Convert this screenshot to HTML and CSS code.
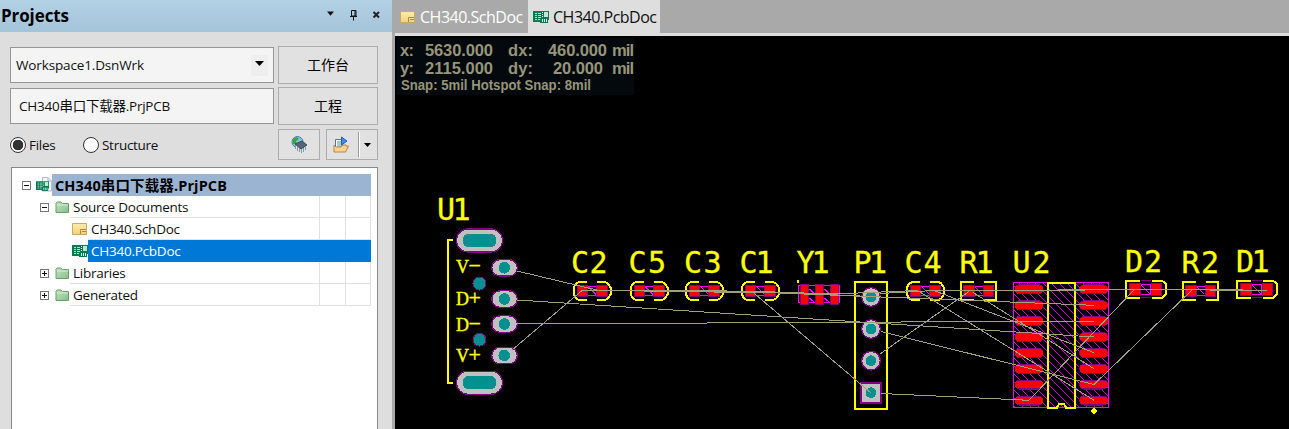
FILE: index.html
```
<!DOCTYPE html>
<html lang="zh-CN">
<head>
<meta charset="utf-8">
<title>CH340.PcbDoc</title>
<link rel="stylesheet" href="styles.css">
</head>
<body>
<svg class="defs" width="0" height="0">
  <defs>
    <linearGradient id="folderFill" x1="0" y1="0" x2="1" y2="1"><stop offset="0" stop-color="#c2e0bd"/><stop offset="1" stop-color="#86c08d"/></linearGradient>
    <linearGradient id="schFill" x1="0" y1="0" x2="0" y2="1"><stop offset="0" stop-color="#fdebae"/><stop offset="1" stop-color="#f0d27c"/></linearGradient>
    <symbol id="folder" viewBox="0 0 15 13"><path d="M1 11.5V2.500L2 1H6L7.500 2.500H13.500V11.500Z" fill="url(#folderFill)" stroke="#6a9f72"/><path d="M2 4H13" stroke="#d7edd4"/></symbol>
    <symbol id="sch" viewBox="0 0 15 12"><path d="M.5.500H14.500V11.500H.5Z" fill="url(#schFill)" stroke="#cbaa5c"/><path d="M8.500 11V6.500H14M10 8.500H14" fill="none" stroke="#a98a48"/></symbol>
    <symbol id="pcb" viewBox="0 0 16 12"><path d="M0 0H16V9H15V12H7V11H0Z" fill="#087a54"/><path d="M2 2.500H4M5 2.500H8M2 4.500H4M5 4.500H8M2 6.500H4M5 6.500H8M2 8.500H4M5 8.500H7" stroke="#a8e0c4"/><path d="M9.500 1V7" stroke="#fff" stroke-dasharray="1 1"/><path d="M11 1H15V6H11Z" fill="#b9ead4"/><path d="M9.500 8V11M11.500 8V11M13.500 8V11" stroke="#d6f2e4"/></symbol>
  </defs>
</svg>
<div class="app">
  <aside class="panel">
    <header class="panel-head">
      <h1>Projects</h1>
      <svg class="head-icons" viewBox="0 0 54 12"><path d="M0 2.500H7L3.500 6.800Z" fill="#111"/><path d="M24.500 1.500H29V7H24.500ZM28 1V7M23 7.500H30M26.500 7.500V11.500" fill="none" stroke="#111"/><path d="M46.500 3L52 8.500M52 3L46.500 8.500" stroke="#222" stroke-width="2"/></svg>
    </header>
    <div class="controls">
      <div class="field combo"><span class="ws">Workspace1.DsnWrk</span><span class="drop"><svg viewBox="0 0 9 5"><path d="M0 0H9L4.500 5Z"/></svg></span></div>
      <button class="btn">工作台</button>
      <div class="field project"><span class="prj">CH340串口下载器.PrjPCB</span></div>
      <button class="btn">工程</button>
    </div>
    <div class="modes">
      <span class="radio on"></span><label class="files">Files</label>
      <span class="radio"></span><label class="structure">Structure</label>
      <button class="tool chip"><svg viewBox="0 0 17 17"><circle cx="6.500" cy="6" r="5.500" fill="#7fc6e6" stroke="#43819c"/><path d="M2 3L6 1L8 3L5 5L6 8L2 8Z" fill="#39a637"/><path d="M5 12L11 16L16 13V9L5 8Z" fill="#dbe6e8"/><path d="M4 8L11 5L16 9L10 13Z" fill="#566575" stroke="#3d4a57"/><path d="M4.500 9V13M6.500 11V15M8.500 12V16M10.500 13V17M12.500 12V16M14.500 11V14" stroke="#7f9ba5" stroke-width="1"/></svg></button>
      <button class="tool split"><svg class="open" viewBox="0 0 16 17"><path d="M2.500 3.500H9V14H2.500Z" fill="#fff" stroke="#53789c"/><path d="M4 6H8M4 8H8M4 10H8" stroke="#5689b8"/><path d="M8.500 1L14 5L8.500 9Z" fill="#4389ed" stroke="#235fca"/><path d="M1 9V16H12.500L15.500 10H13V9H10L8 11H3Z" fill="#f7d291" stroke="#b78541"/></svg><i></i><svg class="caret" viewBox="0 0 7 4"><path d="M0 0H7L3.500 4Z"/></svg></button>
    </div>
    <div class="tree">
      <div class="row root"><span class="toggle"></span><svg class="ic-root" viewBox="0 0 16 16"><path d="M6.500.5H12L15.500 4V14H6.500Z" fill="#f4f6fb" stroke="#b0b9ce"/><path d="M12 .5V4H15.500" fill="none" stroke="#b0b9ce"/><use href="#pcb" y="4" width="13" height="10"/></svg><span class="name">CH340串口下载器.PrjPCB</span></div>
      <div class="row l1"><span class="toggle"></span><svg class="ic-folder"><use href="#folder"/></svg><span class="name">Source Documents</span></div>
      <div class="row l2"><svg class="ic-doc"><use href="#sch" width="15" height="12"/></svg><span class="name">CH340.SchDoc</span></div>
      <div class="row l2 selected"><svg class="ic-doc"><use href="#pcb" width="16" height="12"/></svg><span class="name">CH340.PcbDoc</span></div>
      <div class="row l1"><span class="toggle plus"></span><svg class="ic-folder"><use href="#folder"/></svg><span class="name">Libraries</span></div>
      <div class="row l1"><span class="toggle plus"></span><svg class="ic-folder"><use href="#folder"/></svg><span class="name">Generated</span></div>
    </div>
  </aside>
  <main class="editor">
    <nav class="tabs">
      <div class="tab"><svg><use href="#sch" width="15" height="12"/></svg><span>CH340.SchDoc</span></div>
      <div class="tab active"><svg><use href="#pcb" width="16" height="12"/></svg><span>CH340.PcbDoc</span></div>
    </nav>
    <svg class="board" viewBox="395 36 894 393">
      <defs>
        <pattern id="hatch" width="8" height="8" patternUnits="userSpaceOnUse"><path d="M-1 -1L9 9" stroke="#c800c8" stroke-width="1"/></pattern>
        <g id="chip"><path class="mag" d="M-5-4.500H5M-5 4.500H5M-4-4L4 4"/><path class="pad" d="M-15-5H-4.500V6H-15ZM4.500-5H15V6H4.500Z"/></g>
        <g id="cap"><use href="#chip"/><path class="silk" d="M-5-8.500H-13L-16-7L-18.500-3V4L-16 8L-13 9.500H-5M5-8.500H13L16-7L18.500-3V4L16 8L13 9.500H5"/></g>
        <g id="res"><use href="#chip"/><path class="silk" d="M-5-8.500H-17.500V9.500H-5M5-8.500H17.500V9.500H5"/></g>
        <g id="led"><path class="mag" d="M-5-5H5V5H-5ZM-5-5L5 5"/><path class="rim" d="M-5-9H5M-5 8H5"/><path class="pad" d="M-16-6H-5.500V6H-16ZM5.500-6H16V6H5.500Z"/><path class="silk" d="M-6-8.500H-19.500V8.500H-6M6-8.500H17L20-6V5L17 8.500H6"/></g>
        <g id="slot"><rect class="ring" x="-23" y="-11.500" width="46" height="23" rx="11.500"/><rect class="hole" x="-16.500" y="-6.500" width="33" height="13" rx="5"/></g>
        <g id="oval"><rect class="ring" x="-12.500" y="-8.200" width="25.500" height="16.500" rx="8.200"/><circle class="hole" r="5.800"/></g>
        <g id="round"><circle class="ring" r="9.300"/><circle class="hole" r="5.400"/></g>
        <g id="pin"><rect x="-14.500" y="-5" width="29" height="10" rx="5" fill="#800080"/><rect x="-14" y="-3.800" width="28" height="7.700" rx="3.800" fill="#f00"/></g>
        <g id="pins"><use href="#pin" y="289.300"/><use href="#pin" y="305.300"/><use href="#pin" y="321"/><use href="#pin" y="337"/><use href="#pin" y="353"/><use href="#pin" y="368.800"/><use href="#pin" y="384.500"/><use href="#pin" y="400.500"/></g>
      </defs>
      <rect class="hud-bg" x="397" y="38" width="237" height="57"/>
      <g class="hud">
        <text x="400" y="56" textLength="14">x:</text><text x="425" y="56" textLength="68">5630.000</text><text x="508" y="56" textLength="25">dx:</text><text x="548" y="56" textLength="59">460.000</text><text x="612" y="56" textLength="22">mil</text>
        <text x="400" y="74" textLength="14">y:</text><text x="425" y="74" textLength="68">2115.000</text><text x="508" y="74" textLength="25">dy:</text><text x="553" y="74" textLength="50">20.000</text><text x="612" y="74" textLength="22">mil</text>
        <text class="snap" x="401" y="90" textLength="190" lengthAdjust="spacingAndGlyphs">Snap: 5mil Hotspot Snap: 8mil</text>
      </g>
      <g class="crisp">
        <path class="silk" d="M453 240H448V383H453"/>
        <use href="#slot" x="479.500" y="240.500"/><use href="#slot" x="479.500" y="382.700"/>
        <use href="#oval" x="504.300" y="267.800"/><use href="#oval" x="504.300" y="299"/><use href="#oval" x="504.300" y="324"/><use href="#oval" x="504.300" y="355.500"/>
        <circle class="mount" cx="479.500" cy="283.500" r="6.500"/><circle class="mount" cx="479.500" cy="339.700" r="6.500"/>
        <use href="#cap" x="592" y="290.500"/><use href="#cap" x="649" y="290.500"/><use href="#cap" x="704.200" y="290.500"/><use href="#cap" x="760.200" y="290.500"/><use href="#cap" x="925.300" y="290.500"/>
        <use href="#res" x="978.500" y="290.500"/><use href="#res" x="1200.500" y="290.500"/>
        <use href="#led" x="1145.500" y="289.500"/><use href="#led" x="1256.500" y="289.500"/>
        <path class="mag" d="M798.500 285.500H839V302H798.500ZM808 288L815 294M823 288L830 294M808 297L814 302M823 297L829 302"/>
        <path class="pad" d="M800.500 284H808V304H800.500ZM815.500 284H823V304H815.500ZM830.500 284H838V304H830.500Z"/>
        <path d="M797 280H799V283H797Z" fill="#ff0"/>
        <rect class="silk" x="855" y="282" width="32" height="127"/>
        <use href="#round" x="871" y="297"/><use href="#round" x="871" y="329"/><use href="#round" x="871" y="360.700"/>
        <rect class="ring" x="861" y="383" width="20" height="20"/><circle class="hole" cx="871" cy="392.700" r="5.400"/>
        <rect x="1013.500" y="282.500" width="95" height="125" fill="url(#hatch)" stroke="#f0f"/>
        <use href="#pins" x="1029"/><use href="#pins" x="1093.700"/>
        <path class="silk" d="M1048 282.500H1075V407.500H1066L1064 404H1059L1057 407.500H1048Z"/>
        <circle cx="1094" cy="411" r="2.700" fill="#ff0"/>
        <path class="net" d="M517 271L601 291M517 300L1094 337M517 324L1094 321M512 350L582 290.500H714L1094 305.300M644 291H716L772 292L871 296.500M752 291.500L871 393M695 291.500H760L834 294L917 290.500M880 293.500L934 290.500M881 393.500L1029 400.300M881 331.500L1094 384.500M880 354L969 291.500M917.500 290.500L1094 400.300M934 290.500L1094 352.700M973 292.500L1094 368.700M934 290.500L1085 290M1058 289.500H1192M1134 290L1029 400.300M1192 290L1094 384.500M1192 289.500L1210 290H1267M1210 290.500H1243"/>
        <path class="net wide" d="M658 291H695M714 292H768M1210 290H1243"/>
      </g>
      <g class="ref">
        <text x="437 452.500" y="220">U1</text><text x="571 589.500" y="273">C2</text><text x="628.500 648" y="273">C5</text><text x="684 703.500" y="273">C3</text><text x="739.500 755.500" y="273">C1</text><text x="796.500 811.500" y="272.500">Y1</text><text x="853.500 869" y="272.500">P1</text><text x="904.500 923.500" y="272.500">C4</text><text x="959.500 975.500" y="272.500">R1</text><text x="1012.500 1032.500" y="273">U2</text><text x="1125 1144" y="272">D2</text><text x="1181.500 1201" y="273">R2</text><text x="1236 1251.500" y="272">D1</text>
      </g>
      <g class="pinname">
        <text x="456" y="272.700">V<tspan class="sign" x="468.500">−</tspan></text><text x="456" y="305.300">D<tspan class="sign" x="468.500">+</tspan></text><text x="456" y="330.700">D<tspan class="sign" x="468.500">−</tspan></text><text x="456" y="361.700">V<tspan class="sign" x="468.500">+</tspan></text>
      </g>
    </svg>
  </main>
</div>
</body>
</html>
```
FILE: styles.css
```
* { box-sizing: border-box; }
body { margin: 0; font: 13.500px/22px "Open Sans", "Noto Sans CJK SC", sans-serif; color: #111; }
.defs { display: block; height: 0; }
.app { display: flex; width: 1289px; height: 429px; overflow: hidden; background: #dedede; }
.panel { width: 392px; flex: none; display: flex; flex-direction: column; }
.panel-head { height: 32px; flex: none; display: flex; align-items: center; justify-content: space-between; padding: 0 11px 0 1px; background: linear-gradient(#b3d1e5, #a4c4da); }
.panel-head h1 { margin: 0; font-size: 17px; font-weight: 700; letter-spacing: -.1px; color: #000; }
.head-icons { width: 54px; height: 12px; margin-top: -3px; }
.controls { display: grid; grid-template-columns: 264px 100px; grid-template-rows: 38px 38px; column-gap: 4px; row-gap: 3px; padding: 14px 0 0 10px; align-items: center; }
.field { height: 36px; border: 1px solid #969696; background: #f4f4f4; display: flex; align-items: center; justify-content: space-between; padding: 0 5px; white-space: nowrap; }
.project { padding-left: 8px; }
.ws { letter-spacing: -.14px; }
.prj { letter-spacing: -.24px; }
.drop { width: 17px; height: 21px; background: #eee; display: flex; align-items: center; justify-content: center; }
.drop svg { width: 9px; height: 5px; margin-top: -3px; }
.btn, .tool { border: 1px solid #adadad; background: #e1e1e1; padding: 0; font: 14px "Open Sans", "Noto Sans CJK SC", sans-serif; color: #000; }
.btn { height: 38px; padding-bottom: 2px; }
.modes { display: flex; align-items: center; height: 31px; margin: 4px 0 0 10px; }
.radio { width: 16px; height: 16px; border: 1px solid #333; border-radius: 50%; background: #fff; flex: none; }
.radio.on { background: radial-gradient(circle, #333 0 5px, #fff 5.600px); }
.files, .structure { padding-top: 1px; margin-left: 3px; letter-spacing: -.28px; }
.files { width: 54px; }
.structure { width: 92px; }
.tool { height: 31px; display: flex; align-items: center; }
.chip { width: 42px; justify-content: center; margin-left: auto; }
.chip svg { width: 17px; height: 17px; }
.split { width: 52px; margin: 0 14px 0 6px; padding-left: 6px; }
.open { width: 16px; height: 17px; }
.split i { width: 2px; height: 25px; margin-left: 9px; border-left: 1px solid #999; border-right: 1px solid #fff; }
.caret { width: 7px; height: 4px; margin-left: 4px; }
.tree { margin: 7px 14px 0 11px; flex: 1; background: #fff; border: 1px solid #888; border-bottom: 0; padding: 6px 6px 0 10px; }
.row { height: 22px; display: flex; align-items: center; white-space: nowrap; }
.row .name { flex: 1; height: 22px; line-height: 23px; padding-left: 3px; letter-spacing: -.24px; border-bottom: 1px solid #e1e1e1; background: linear-gradient(#e1e1e1,#e1e1e1) right 51px top/1px 100% no-repeat, linear-gradient(#e1e1e1,#e1e1e1) right 25px top/1px 100% no-repeat, linear-gradient(#e1e1e1,#e1e1e1) right top/1px 100% no-repeat; }
.root .name { background: #9bb4d1; border: 0; font-size: 14.500px; font-weight: 700; letter-spacing: .12px; color: #000; margin-left: 1px; }
.selected .name { background: #0078d7; border: 0; color: #fff; }
.toggle { width: 9px; height: 9px; border: 1px solid #777; flex: none; background: linear-gradient(#111,#111) center/5px 1px no-repeat; }
.toggle.plus { background: linear-gradient(#111,#111) center/5px 1px no-repeat, linear-gradient(#111,#111) center/1px 5px no-repeat; }
.ic-root { width: 16px; height: 16px; margin-left: 5px; flex: none; }
.root .name { margin-left: 0; }
.l1 { padding-left: 18px; }
.ic-folder { width: 15px; height: 13px; margin: 0 0 0 6px; flex: none; }
.l2 { padding-left: 50px; }
.ic-doc { width: 16px; height: 12px; flex: none; }
.editor { flex: 1; min-width: 0; border-left: 3px solid #a9a9a9; background: #dedede; display: flex; flex-direction: column; }
.tabs { height: 33px; flex: none; display: flex; background: #a9a9a9; }
.tab { display: flex; align-items: center; font-size: 16px; color: #fff; width: 133px; padding-left: 5px; letter-spacing: -.5px; white-space: nowrap; }
.tab svg { width: 16px; height: 12px; margin-right: 4px; flex: none; }
.tab.active { background: #dedede; color: #111; width: 132px; }
.board { width: 894px; height: 393px; margin-top: 3px; background: #000; display: block; flex: none; }
.hud-bg { fill: #03090d; }
.hud { font: bold 16.500px "Liberation Sans", sans-serif; fill: #96957a; }
.hud .snap { font-size: 14px; }
.crisp { shape-rendering: crispEdges; }
.silk { fill: none; stroke: #ff0; stroke-width: 2; }
.mag { fill: none; stroke: #f0f; stroke-width: 1; }
.rim { fill: none; stroke: #800080; }
.pad { fill: #f00; stroke: #800080; stroke-width: 1; }
.ring { fill: #c0c0c0; stroke: #800080; stroke-width: 1.300; }
.hole { fill: #009090; }
.mount { fill: #009090; stroke: #800080; }
.net { fill: none; stroke: #a0a078; stroke-width: 1; }
.wide { stroke-width: 2; }
.ref { font: 30px "DejaVu Sans Mono", monospace; fill: #ff0; stroke: #ff0; stroke-width: .3; }
.pinname { font: 18px "Liberation Serif", serif; fill: #ff0; stroke: #ff0; stroke-width: .4; }
.sign { font-size: 22px; }
```
